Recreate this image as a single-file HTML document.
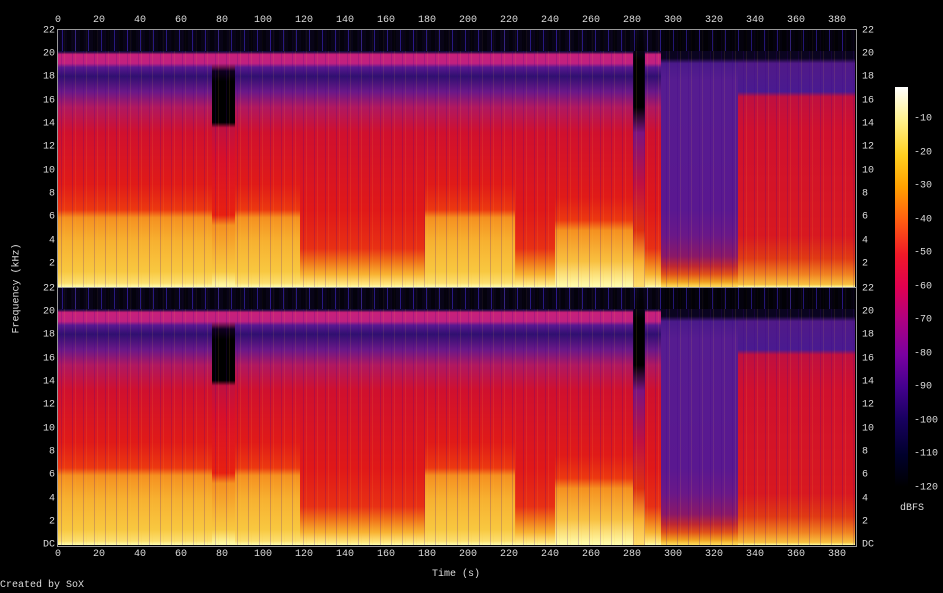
<!DOCTYPE html>
<html><head><meta charset="utf-8"><style>
body{margin:0;background:#000;width:943px;height:593px;overflow:hidden;position:relative;font-family:"Liberation Mono",monospace;font-size:10px;color:#ddd}
.t{position:absolute;white-space:nowrap;line-height:11px}
.xc{transform:translateX(-50%)}
.yl{right:888px;transform:translateY(-50%)}
.yr{left:862px;transform:translateY(-50%)}
.cl{left:914px;transform:translateY(-50%)}
.frame{position:absolute;left:57px;top:29px;width:798px;height:516px;border:1px solid #999}
.sep{position:absolute;left:57px;top:287px;width:800px;height:1px;background:#999}
.panel{position:absolute;left:58px;width:797px;height:257px;overflow:hidden}
.s{position:absolute;top:0;height:100%}
.n{background:linear-gradient(#140a3a 0%,#140a3a 8.5%,#c8207a 9.5%,#c02080 13%,#5a1890 14.5%,#301070 18%,#6a1888 24%,#b01860 30%,#d0102e 40%,#e01a18 60%,#ec3810 70%,#f59020 73%,#f7b030 82%,#f8c840 94%,#fce070 98.5%,#ffffb0 100%)}
.r{background:linear-gradient(#140a3a 0%,#140a3a 8.5%,#c8207a 9.5%,#c02080 13%,#5a1890 14.5%,#301070 18%,#6a1888 24%,#b01860 30%,#d0102e 40%,#e01818 70%,#e83014 85%,#f07018 90%,#f8b030 95%,#ffe880 99%,#ffffb0 100%)}
.bk{background:linear-gradient(#140a3a 0%,#140a3a 8.5%,#c8207a 9.5%,#c02080 13%,#100020 16%,#000 20%,#000 36%,#c01040 38%,#d8102a 50%,#e82010 72%,#f59020 76%,#f8c840 94%,#ffffb0 100%)}
.y5{background:linear-gradient(#140a3a 0%,#140a3a 8.5%,#c8207a 9.5%,#c02080 13%,#5a1890 14.5%,#301070 18%,#6a1888 24%,#b01860 30%,#d0102e 40%,#e01a18 65%,#ec3810 74%,#f59020 78%,#f8c040 90%,#ffffb0 100%)}
.dk{background:linear-gradient(#140a3a 0%,#000 12%,#000 30%,#7a1480 40%,#c01040 60%,#e03010 78%,#f8b030 90%,#ffe070 100%)}
.pu{background:linear-gradient(#0a0420 0%,#0a0420 11%,#4a1a8a 13%,#561c90 20%,#5a1890 70%,#6a1888 80%,#8a1868 88%,#c02830 92%,#e05018 95%,#f0a020 98%,#ffe060 100%)}
.pr{background:linear-gradient(#0a0420 0%,#0a0420 11%,#501a88 13%,#4a1a90 24%,#c01040 26%,#d0102e 40%,#d81820 80%,#e03a14 89%,#f08020 95%,#f8c040 99%,#ffffa0 100%)}
.tex{position:absolute;inset:0;background:repeating-linear-gradient(90deg,rgba(0,0,0,0) 0 3px,rgba(60,0,140,.2) 3px 4px,rgba(0,0,0,0) 4px 6px,rgba(255,200,60,.1) 6px 7px,rgba(0,0,0,0) 7px 11px)}
.top{position:absolute;left:0;top:0;width:100%;height:21px;background:repeating-linear-gradient(90deg,rgba(0,0,0,.6) 0 4px,rgba(60,40,200,.5) 4px 5px,rgba(0,0,0,.6) 5px 9px,rgba(0,0,0,.8) 9px 13px)}
.cb{position:absolute;left:895px;top:87px;width:13px;height:400px;background:linear-gradient(#fff 0%,#fff290 8%,#ffd020 17%,#ffa000 25%,#ff6010 33%,#f01828 42%,#e00050 50%,#b00080 58%,#7a00a0 67%,#44008e 75%,#180060 83%,#00002c 92%,#000 100%)}
</style></head><body>
<div class="panel" style="top:30px">
<div class="s n" style="left:0;width:154px"></div>
<div class="s bk" style="left:154px;width:23px"></div>
<div class="s n" style="left:177px;width:65px"></div>
<div class="s r" style="left:242px;width:125px"></div>
<div class="s n" style="left:367px;width:90px"></div>
<div class="s r" style="left:457px;width:40px"></div>
<div class="s y5" style="left:497px;width:78px"></div>
<div class="s dk" style="left:575px;width:12px"></div>
<div class="s r" style="left:587px;width:16px"></div>
<div class="s pu" style="left:603px;width:77px"></div>
<div class="s pr" style="left:680px;width:117px"></div>
<div class="tex"></div><div class="top"></div>
</div>
<div class="panel" style="top:288px">
<div class="s n" style="left:0;width:154px"></div>
<div class="s bk" style="left:154px;width:23px"></div>
<div class="s n" style="left:177px;width:65px"></div>
<div class="s r" style="left:242px;width:125px"></div>
<div class="s n" style="left:367px;width:90px"></div>
<div class="s r" style="left:457px;width:40px"></div>
<div class="s y5" style="left:497px;width:78px"></div>
<div class="s dk" style="left:575px;width:12px"></div>
<div class="s r" style="left:587px;width:16px"></div>
<div class="s pu" style="left:603px;width:77px"></div>
<div class="s pr" style="left:680px;width:117px"></div>
<div class="tex"></div><div class="top"></div>
</div>
<div class="frame"></div><div class="sep"></div>
<div class="cb"></div>

<div class="t xc" style="top:15px;left:58px">0</div><div class="t xc" style="top:15px;left:99px">20</div><div class="t xc" style="top:15px;left:140px">40</div><div class="t xc" style="top:15px;left:181px">60</div><div class="t xc" style="top:15px;left:222px">80</div><div class="t xc" style="top:15px;left:263px">100</div><div class="t xc" style="top:15px;left:304px">120</div><div class="t xc" style="top:15px;left:345px">140</div><div class="t xc" style="top:15px;left:386px">160</div><div class="t xc" style="top:15px;left:427px">180</div><div class="t xc" style="top:15px;left:468px">200</div><div class="t xc" style="top:15px;left:509px">220</div><div class="t xc" style="top:15px;left:550px">240</div><div class="t xc" style="top:15px;left:591px">260</div><div class="t xc" style="top:15px;left:632px">280</div><div class="t xc" style="top:15px;left:673px">300</div><div class="t xc" style="top:15px;left:714px">320</div><div class="t xc" style="top:15px;left:755px">340</div><div class="t xc" style="top:15px;left:796px">360</div><div class="t xc" style="top:15px;left:837px">380</div>

<div class="t xc" style="top:549px;left:58px">0</div><div class="t xc" style="top:549px;left:99px">20</div><div class="t xc" style="top:549px;left:140px">40</div><div class="t xc" style="top:549px;left:181px">60</div><div class="t xc" style="top:549px;left:222px">80</div><div class="t xc" style="top:549px;left:263px">100</div><div class="t xc" style="top:549px;left:304px">120</div><div class="t xc" style="top:549px;left:345px">140</div><div class="t xc" style="top:549px;left:386px">160</div><div class="t xc" style="top:549px;left:427px">180</div><div class="t xc" style="top:549px;left:468px">200</div><div class="t xc" style="top:549px;left:509px">220</div><div class="t xc" style="top:549px;left:550px">240</div><div class="t xc" style="top:549px;left:591px">260</div><div class="t xc" style="top:549px;left:632px">280</div><div class="t xc" style="top:549px;left:673px">300</div><div class="t xc" style="top:549px;left:714px">320</div><div class="t xc" style="top:549px;left:755px">340</div><div class="t xc" style="top:549px;left:796px">360</div><div class="t xc" style="top:549px;left:837px">380</div>

<div class="t yl" style="top:31px">22</div><div class="t yl" style="top:54px">20</div><div class="t yl" style="top:77px">18</div><div class="t yl" style="top:101px">16</div><div class="t yl" style="top:124px">14</div><div class="t yl" style="top:147px">12</div><div class="t yl" style="top:171px">10</div><div class="t yl" style="top:194px">8</div><div class="t yl" style="top:217px">6</div><div class="t yl" style="top:241px">4</div><div class="t yl" style="top:264px">2</div>
<div class="t yl" style="top:289px">22</div><div class="t yl" style="top:312px">20</div><div class="t yl" style="top:335px">18</div><div class="t yl" style="top:359px">16</div><div class="t yl" style="top:382px">14</div><div class="t yl" style="top:405px">12</div><div class="t yl" style="top:429px">10</div><div class="t yl" style="top:452px">8</div><div class="t yl" style="top:475px">6</div><div class="t yl" style="top:499px">4</div><div class="t yl" style="top:522px">2</div><div class="t yl" style="top:545px">DC</div>

<div class="t yr" style="top:31px">22</div><div class="t yr" style="top:54px">20</div><div class="t yr" style="top:77px">18</div><div class="t yr" style="top:101px">16</div><div class="t yr" style="top:124px">14</div><div class="t yr" style="top:147px">12</div><div class="t yr" style="top:171px">10</div><div class="t yr" style="top:194px">8</div><div class="t yr" style="top:217px">6</div><div class="t yr" style="top:241px">4</div><div class="t yr" style="top:264px">2</div>
<div class="t yr" style="top:289px">22</div><div class="t yr" style="top:312px">20</div><div class="t yr" style="top:335px">18</div><div class="t yr" style="top:359px">16</div><div class="t yr" style="top:382px">14</div><div class="t yr" style="top:405px">12</div><div class="t yr" style="top:429px">10</div><div class="t yr" style="top:452px">8</div><div class="t yr" style="top:475px">6</div><div class="t yr" style="top:499px">4</div><div class="t yr" style="top:522px">2</div><div class="t yr" style="top:545px">DC</div>

<div class="t cl" style="top:119px">-10</div><div class="t cl" style="top:153px">-20</div><div class="t cl" style="top:186px">-30</div><div class="t cl" style="top:220px">-40</div><div class="t cl" style="top:253px">-50</div><div class="t cl" style="top:287px">-60</div><div class="t cl" style="top:320px">-70</div><div class="t cl" style="top:354px">-80</div><div class="t cl" style="top:387px">-90</div><div class="t cl" style="top:421px">-100</div><div class="t cl" style="top:454px">-110</div><div class="t cl" style="top:488px">-120</div>
<div class="t" style="left:900px;top:503px">dBFS</div>

<div class="t" style="left:-28px;top:283px;transform:rotate(-90deg)">Frequency (kHz)</div>
<div class="t" style="left:432px;top:569px">Time (s)</div>
<div class="t" style="left:0;top:580px">Created by SoX</div>
</body></html>
